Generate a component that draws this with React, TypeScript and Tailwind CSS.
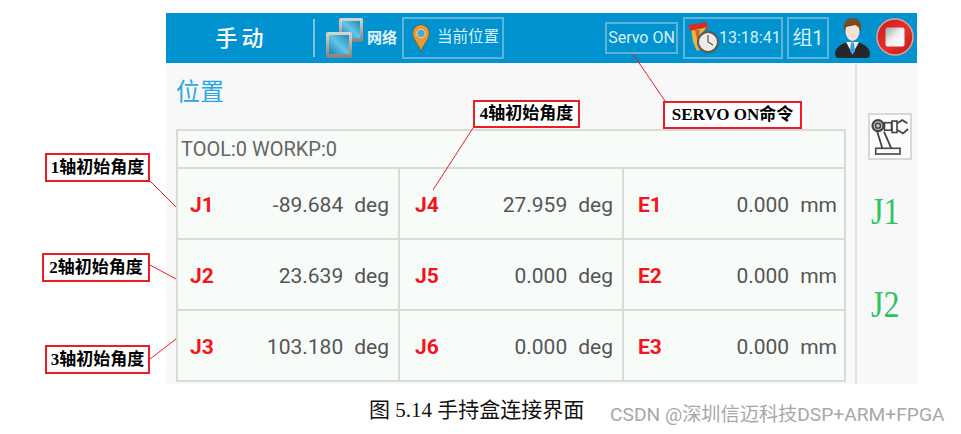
import React from "react";

const cjk = "font-['Roboto','Noto_Sans_CJK_SC',sans-serif]";
const song = "font-['Liberation_Serif','Noto_Sans_CJK_SC',serif]";

interface Axis {
  name: string;
  value: string;
  unit: string;
}

const rows: Axis[][] = [
  [
    { name: "J1", value: "-89.684", unit: "deg" },
    { name: "J4", value: "27.959", unit: "deg" },
    { name: "E1", value: "0.000", unit: "mm" },
  ],
  [
    { name: "J2", value: "23.639", unit: "deg" },
    { name: "J5", value: "0.000", unit: "deg" },
    { name: "E2", value: "0.000", unit: "mm" },
  ],
  [
    { name: "J3", value: "103.180", unit: "deg" },
    { name: "J6", value: "0.000", unit: "deg" },
    { name: "E3", value: "0.000", unit: "mm" },
  ],
];

const cellClass = [
  "w-[222px] pl-[12px] pr-[9px] border-r-2 border-[#dadad6]",
  "w-[224px] pl-[15px] pr-[9px] border-r-2 border-[#dadad6]",
  "flex-1 pl-[14px] pr-[7px]",
];

const rowClass = [
  "h-[71px] border-b-2 border-[#dadad6]",
  "h-[71px] border-b-2 border-[#dadad6]",
  "h-[69px]",
];

const NetworkIcon = () => (
  <svg width="38" height="40" viewBox="0 0 38 40">
    <defs>
      <linearGradient id="scr" x1="0" y1="1" x2="1" y2="0">
        <stop offset="0" stopColor="#1a7fb4" />
        <stop offset="0.5" stopColor="#62c6ea" />
        <stop offset="1" stopColor="#1c88bc" />
      </linearGradient>
      <linearGradient id="frame" x1="0" y1="0" x2="0" y2="1">
        <stop offset="0" stopColor="#d8d8d0" />
        <stop offset="1" stopColor="#84847c" />
      </linearGradient>
    </defs>
    <rect x="13" y="0" width="24" height="24" rx="2" fill="url(#frame)" />
    <rect x="16" y="3" width="18" height="17" fill="url(#scr)" />
    <rect x="0" y="14" width="26" height="26" rx="2" fill="url(#frame)" />
    <rect x="3" y="17" width="20" height="19" fill="url(#scr)" />
  </svg>
);

const PinIcon = () => (
  <svg width="18" height="28" viewBox="0 0 18 28">
    <path
      d="M9 27.5 C7 21 0.7 15.5 0.7 9 A8.3 8.3 0 0 1 17.3 9 C17.3 15.5 11 21 9 27.5 Z"
      fill="#e89a36"
      stroke="#6f5a2c"
      strokeWidth="0.8"
    />
    <circle cx="9" cy="9.5" r="4.2" fill="#4aa8cf" stroke="#fbe6b8" strokeWidth="0.8" />
  </svg>
);

const ClockIcon = () => (
  <svg width="32" height="32" viewBox="0 0 32 32">
    <path d="M4 6 L20 5 L14 12 L15 27 L10 29 L6 20 Z" fill="#e9b53c" />
    <path d="M8 8 L13 8 L11 22 Z" fill="#d9622c" />
    <path d="M1 3 L19 0 L21 5 L3 9 Z" fill="#cf2f26" />
    <rect x="18.5" y="6" width="3" height="4" fill="#6a675f" />
    <circle cx="21" cy="20" r="10" fill="#ecece8" stroke="#5c5952" strokeWidth="2" />
    <path d="M21 13 V20 L26 23" fill="none" stroke="#55524c" strokeWidth="1.2" />
  </svg>
);

const PersonIcon = () => (
  <svg width="35" height="40" viewBox="0 0 35 40">
    <path d="M0 36 C0 29 7 26 12 24 L23 24 C28 26 35 29 35 36 C35 39 33 40 31 40 L4 40 C2 40 0 39 0 36 Z" fill="#24282a" />
    <path d="M11 24 L17.5 36 L24 24 Z" fill="#f4f4f4" />
    <path d="M16 24.5 H19 L20 33 L17.5 37 L15 33 Z" fill="#3f9fdc" />
    <ellipse cx="17.5" cy="13" rx="7" ry="10" fill="#f8e2d2" />
    <path d="M9.5 15 C7 4 12 0 18 0 C24 0 28 5 25.5 15 C25 10 23 8 20 7 C16 8.5 12 8 10.5 9.5 C10 11 10 13 9.5 15 Z" fill="#7c4a22" />
  </svg>
);

const StopIcon = () => (
  <svg width="38" height="38" viewBox="0 0 38 38">
    <defs>
      <linearGradient id="sq" x1="0" y1="0" x2="1" y2="1">
        <stop offset="0" stopColor="#a4a4a0" />
        <stop offset="0.5" stopColor="#f2f2f0" />
        <stop offset="1" stopColor="#ffffff" />
      </linearGradient>
      <linearGradient id="disc" x1="0" y1="0" x2="1" y2="1">
        <stop offset="0" stopColor="#c21f1c" />
        <stop offset="0.55" stopColor="#e8302a" />
        <stop offset="1" stopColor="#b81a18" />
      </linearGradient>
    </defs>
    <circle cx="19" cy="19" r="18" fill="url(#disc)" stroke="#e4a09a" strokeWidth="1.5" />
    <rect x="9.5" y="9.5" width="19" height="19" rx="2" fill="url(#sq)" />
  </svg>
);

const RobotIcon = () => (
  <svg width="40" height="43" viewBox="2 2 40 43" fill="none" stroke="#444">
    <circle cx="10" cy="12.7" r="5.5" strokeWidth="2.2" fill="#c4c4c4" />
    <circle cx="10" cy="12.7" r="2.5" strokeWidth="1.4" />
    <rect x="16.5" y="9.7" width="7" height="7.5" strokeWidth="1.6" />
    <rect x="24" y="8" width="5" height="11.5" strokeWidth="1.6" />
    <path d="M29.3 10.3 L34.3 7 L39.3 10.3 M29.3 17 L35 20.5 L40 16" strokeWidth="1.8" />
    <path d="M9.3 18.7 L14.3 35.3 M16 18.7 L23.3 35.3" strokeWidth="1.8" />
    <rect x="7.7" y="35.3" width="24.3" height="5.7" strokeWidth="1.6" />
  </svg>
);

const Callout = ({ text, className }: { text: string; className: string }) => (
  <div
    className={`absolute flex items-center justify-center border-2 border-[#ee1c25] bg-white text-[17px] font-bold text-black whitespace-nowrap ${song} ${className}`}
  >
    {text}
  </div>
);

const HeaderBox = ({ children, className }: { children: React.ReactNode; className: string }) => (
  <div className={`flex items-center border-2 border-[#5fb3d6] text-[#d8f0fa] ${className}`}>{children}</div>
);

const App: React.FC = () => {
  return (
    <div className={`relative w-[961px] h-[434px] bg-white overflow-hidden ${cjk}`}>
      <div className="h-[13px]" />
      <div className="ml-[166px] w-[751px] h-[371px] flex flex-col bg-[#f8f8f8]">
        <div className="h-[50px] bg-[#0093cf] flex items-center">
          <div className="w-[147px] pl-[4px] text-center text-[22px] font-medium tracking-[4px] text-white">手动</div>
          <div className="w-[2px] h-[38px] bg-[#7cc4e2]" />
          <div className="ml-[11px] w-[38px] h-[40px]">
            <NetworkIcon />
          </div>
          <div className="ml-[3px] w-[34px] text-[15px] font-bold text-[#e2f4fb] whitespace-nowrap">网络</div>
          <HeaderBox className="ml-[1px] w-[102px] h-[42px] pl-[8px] gap-[7px]">
            <PinIcon />
            <span className="text-[15.5px] whitespace-nowrap">当前位置</span>
          </HeaderBox>
          <HeaderBox className="ml-[101px] w-[73px] h-[32px] justify-center">
            <span className="text-[16px] whitespace-nowrap">Servo ON</span>
          </HeaderBox>
          <HeaderBox className="ml-[5px] w-[100px] h-[42px] pl-[2px] gap-[0px]">
            <ClockIcon />
            <span className="text-[16px] whitespace-nowrap">13:18:41</span>
          </HeaderBox>
          <HeaderBox className="ml-[4px] w-[42px] h-[42px] justify-center">
            <span className="text-[20px] whitespace-nowrap">组1</span>
          </HeaderBox>
          <div className="ml-[6px] w-[35px] h-[40px]">
            <PersonIcon />
          </div>
          <div className="ml-[6px] w-[38px] h-[38px] -mt-[2px]">
            <StopIcon />
          </div>
        </div>

        <div className="flex-1 flex">
          <div className="w-[689px] pl-[10px] pr-[9px] flex flex-col">
            <div className="h-[66px] pt-[14px] text-[24px] leading-[30px] text-[#2aa7e6]">位置</div>
            <div className="w-[670px] border-2 border-[#dadad6] bg-[#f8fcf9]">
              <div className="h-[38px] pl-[3px] flex items-center text-[20px] text-[#666] border-b-2 border-[#dadad6]">
                TOOL:0 WORKP:0
              </div>
              {rows.map((row, i) => (
                <div key={i} className={`flex ${rowClass[i]}`}>
                  {row.map((cell, j) => (
                    <div key={cell.name} className={`flex items-center pt-[5px] ${cellClass[j]}`}>
                      <span className="w-[40px] text-[21px] font-bold text-[#f5141c]">{cell.name}</span>
                      <span className="flex-1 text-right text-[21px] text-[#555]">{cell.value}</span>
                      <span className="ml-[11px] text-[21px] text-[#555]">{cell.unit}</span>
                    </div>
                  ))}
                </div>
              ))}
            </div>
          </div>
          <div className="w-[2px] bg-[#e2e2e2]" />
          <div className="flex-1 flex flex-col items-start pt-[50px]">
            <div className="ml-[11px] w-[44px] h-[47px] flex items-center justify-center border-2 border-[#d8d8d8] bg-[#fcfcfc]">
              <RobotIcon />
            </div>
            <div className="mt-[24px] ml-[14px] h-[54px] text-[32px] leading-[54px] text-[#2fc463] scale-y-[1.2] font-['Liberation_Serif',serif]">
              J1
            </div>
            <div className="mt-[39px] ml-[14px] h-[54px] text-[32px] leading-[54px] text-[#2fc463] scale-y-[1.2] font-['Liberation_Serif',serif]">
              J2
            </div>
          </div>
        </div>
      </div>

      <div className="flex items-center h-[50px] pl-[369px] pt-[4px]">
        <span className={`w-[241px] text-[21px] text-[#111] whitespace-nowrap ${song}`}>图 5.14 手持盒连接界面</span>
        <span className="pt-[8px] text-[19.2px] text-[#a8a8a8] whitespace-nowrap">CSDN @深圳信迈科技DSP+ARM+FPGA</span>
      </div>

      <svg className="absolute left-0 top-0" width="961" height="434" fill="none" stroke="#ee1c25" strokeWidth="1">
        <path d="M150 181 L176 207" />
        <path d="M150 265 L176 279" />
        <path d="M150 359 L176 339" />
        <path d="M473 128 L433 190" />
        <path d="M633 54 L665 101" />
      </svg>

      <Callout text="1轴初始角度" className="left-[45px] top-[153px] w-[105px] h-[29px]" />
      <Callout text="2轴初始角度" className="left-[42px] top-[253px] w-[108px] h-[29px]" />
      <Callout text="3轴初始角度" className="left-[45px] top-[345px] w-[105px] h-[29px]" />
      <Callout text="4轴初始角度" className="left-[473px] top-[100px] w-[107px] h-[28px]" />
      <Callout text="SERVO ON命令" className="left-[663px] top-[101px] w-[139px] h-[28px]" />
    </div>
  );
};

export default App;
